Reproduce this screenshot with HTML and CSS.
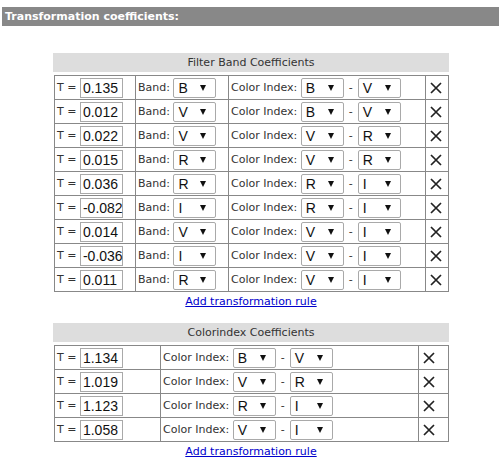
FILE: index.html
```html
<!DOCTYPE html>
<html>
<head>
<meta charset="utf-8">
<link rel="stylesheet" href="styles.css">
</head>
<body>
<div class="title">Transformation coefficients:</div>

<div class="section first">
  <div class="caption">Filter Band Coefficients</div>
  <table class="coef filter">
    <colgroup><col class="c-t"><col class="c-band"><col class="c-ci"><col class="c-x"></colgroup>
    <tbody>
      <tr><td>T = <span class="inp">0.135</span></td><td>Band: <span class="sel">B</span></td><td>Color Index: <span class="sel">B</span><span class="dash">-</span><span class="sel">V</span></td><td class="x"><svg viewBox="0 0 12 12"><path d="M1 1L11 11M11 1L1 11"/></svg></td></tr>
      <tr><td>T = <span class="inp">0.012</span></td><td>Band: <span class="sel">V</span></td><td>Color Index: <span class="sel">B</span><span class="dash">-</span><span class="sel">V</span></td><td class="x"><svg viewBox="0 0 12 12"><path d="M1 1L11 11M11 1L1 11"/></svg></td></tr>
      <tr><td>T = <span class="inp">0.022</span></td><td>Band: <span class="sel">V</span></td><td>Color Index: <span class="sel">V</span><span class="dash">-</span><span class="sel">R</span></td><td class="x"><svg viewBox="0 0 12 12"><path d="M1 1L11 11M11 1L1 11"/></svg></td></tr>
      <tr><td>T = <span class="inp">0.015</span></td><td>Band: <span class="sel">R</span></td><td>Color Index: <span class="sel">V</span><span class="dash">-</span><span class="sel">R</span></td><td class="x"><svg viewBox="0 0 12 12"><path d="M1 1L11 11M11 1L1 11"/></svg></td></tr>
      <tr><td>T = <span class="inp">0.036</span></td><td>Band: <span class="sel">R</span></td><td>Color Index: <span class="sel">R</span><span class="dash">-</span><span class="sel">I</span></td><td class="x"><svg viewBox="0 0 12 12"><path d="M1 1L11 11M11 1L1 11"/></svg></td></tr>
      <tr><td>T = <span class="inp">-0.082</span></td><td>Band: <span class="sel">I</span></td><td>Color Index: <span class="sel">R</span><span class="dash">-</span><span class="sel">I</span></td><td class="x"><svg viewBox="0 0 12 12"><path d="M1 1L11 11M11 1L1 11"/></svg></td></tr>
      <tr><td>T = <span class="inp">0.014</span></td><td>Band: <span class="sel">V</span></td><td>Color Index: <span class="sel">V</span><span class="dash">-</span><span class="sel">I</span></td><td class="x"><svg viewBox="0 0 12 12"><path d="M1 1L11 11M11 1L1 11"/></svg></td></tr>
      <tr><td>T = <span class="inp">-0.036</span></td><td>Band: <span class="sel">I</span></td><td>Color Index: <span class="sel">V</span><span class="dash">-</span><span class="sel">I</span></td><td class="x"><svg viewBox="0 0 12 12"><path d="M1 1L11 11M11 1L1 11"/></svg></td></tr>
      <tr><td>T = <span class="inp">0.011</span></td><td>Band: <span class="sel">R</span></td><td>Color Index: <span class="sel">V</span><span class="dash">-</span><span class="sel">I</span></td><td class="x"><svg viewBox="0 0 12 12"><path d="M1 1L11 11M11 1L1 11"/></svg></td></tr>
    </tbody>
  </table>
  <div class="add"><a href="#">Add transformation rule</a></div>
</div>

<div class="section">
  <div class="caption">Colorindex Coefficients</div>
  <table class="coef colorindex">
    <colgroup><col class="c-t2"><col class="c-ci2"><col class="c-x2"></colgroup>
    <tbody>
      <tr><td>T = <span class="inp">1.134</span></td><td>Color Index: <span class="sel">B</span><span class="dash">-</span><span class="sel">V</span></td><td class="x"><svg viewBox="0 0 12 12"><path d="M1 1L11 11M11 1L1 11"/></svg></td></tr>
      <tr><td>T = <span class="inp">1.019</span></td><td>Color Index: <span class="sel">V</span><span class="dash">-</span><span class="sel">R</span></td><td class="x"><svg viewBox="0 0 12 12"><path d="M1 1L11 11M11 1L1 11"/></svg></td></tr>
      <tr><td>T = <span class="inp">1.123</span></td><td>Color Index: <span class="sel">R</span><span class="dash">-</span><span class="sel">I</span></td><td class="x"><svg viewBox="0 0 12 12"><path d="M1 1L11 11M11 1L1 11"/></svg></td></tr>
      <tr><td>T = <span class="inp">1.058</span></td><td>Color Index: <span class="sel">V</span><span class="dash">-</span><span class="sel">I</span></td><td class="x"><svg viewBox="0 0 12 12"><path d="M1 1L11 11M11 1L1 11"/></svg></td></tr>
    </tbody>
  </table>
  <div class="add"><a href="#">Add transformation rule</a></div>
</div>
</body>
</html>
```

FILE: styles.css
```css
html, body {
  margin: 0;
  padding: 0;
  background: #fff;
}
body {
  font-family: "DejaVu Sans", Verdana, sans-serif;
  font-size: 11px;
  color: #333;
}
.title {
  margin: 7px 3px 0 2px;
  height: 19px;
  line-height: 19px;
  background: #888;
  color: #fff;
  font-weight: bold;
  font-size: 11px;
  padding-left: 3px;
}
.section {
  width: 396px;
  margin-left: 53px;
}
.section.first {
  margin-top: 27px;
}
.caption {
  height: 19px;
  line-height: 19px;
  background: #ddd;
  text-align: center;
  color: #333;
  margin-bottom: 3px;
}
.coef {
  border-collapse: collapse;
  table-layout: fixed;
  width: 394px;
  margin-left: 1px;
}
.coef td {
  border: 1px solid #888;
  height: 24px;
  padding: 0 0 0 2px;
  white-space: nowrap;
  vertical-align: middle;
  box-sizing: border-box;
}
.c-t { width: 81px; }
.c-band { width: 93px; }
.c-ci { width: 197px; }
.c-x { width: 23px; }
.c-t2 { width: 106px; }
.c-ci2 { width: 258px; }
.c-x2 { width: 30px; }
.inp {
  display: inline-block;
  vertical-align: middle;
  box-sizing: border-box;
  width: 43px;
  height: 20px;
  line-height: 18px;
  border: 1px solid #a9a9a9;
  padding-left: 2px;
  font-family: "Liberation Sans", Arial, sans-serif;
  font-size: 14px;
  color: #111;
}
.sel {
  display: inline-flex;
  align-items: center;
  justify-content: space-between;
  vertical-align: middle;
  box-sizing: border-box;
  width: 43px;
  height: 20px;
  border: 1px solid #a9a9a9;
  border-radius: 2px;
  padding: 0 9px 0 4px;
  font-family: "Liberation Sans", Arial, sans-serif;
  font-size: 14px;
  color: #111;
}
.sel::after {
  content: "";
  border-left: 3px solid transparent;
  border-right: 3px solid transparent;
  border-top: 6px solid #111;
}
.dash {
  display: inline-block;
  width: 14px;
  text-align: center;
  vertical-align: middle;
}
.coef td.x {
  padding-left: 4px;
}
.x svg {
  display: block;
  width: 12px;
  height: 12px;
  fill: none;
  stroke: #222;
  stroke-width: 1.7;
}
.add {
  text-align: center;
  line-height: 14px;
  padding: 3px 0 14px;
}
.add a {
  color: #0000cc;
  text-decoration: underline;
}
```
